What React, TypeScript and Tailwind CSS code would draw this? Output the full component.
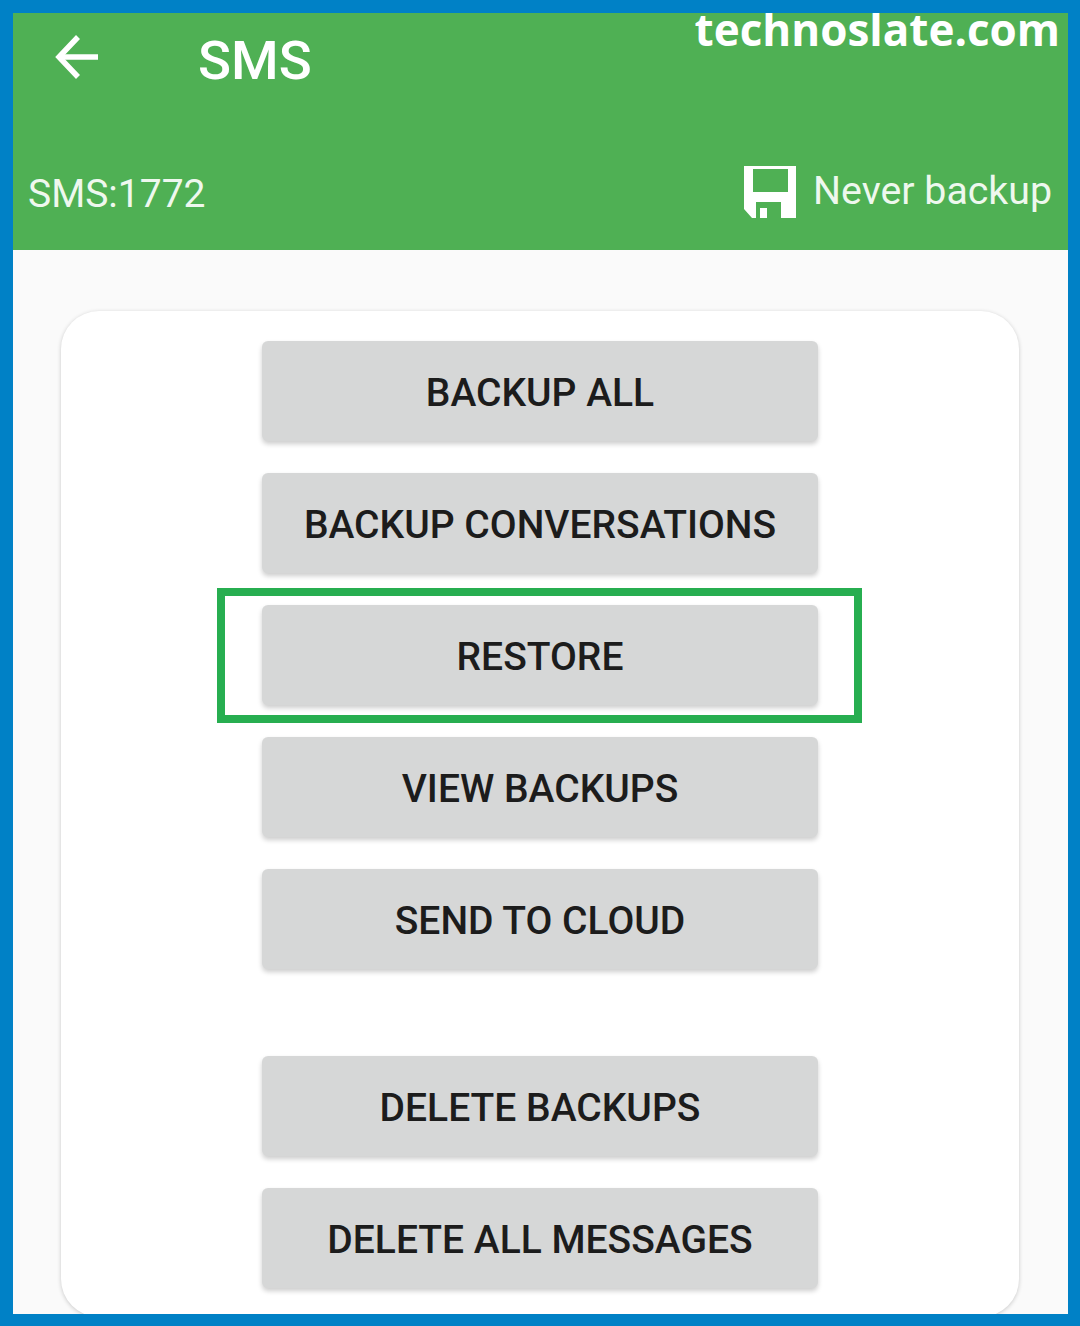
import React from 'react';

const topButtons = ['BACKUP ALL', 'BACKUP CONVERSATIONS', 'RESTORE', 'VIEW BACKUPS', 'SEND TO CLOUD'];
const bottomButtons = ['DELETE BACKUPS', 'DELETE ALL MESSAGES'];

function ActionButton({ label }: { label: string }) {
  return (
    <button className="w-[556px] h-[100px] shrink-0 flex items-center justify-center rounded-[6px] bg-[#d6d7d7] text-[#1c1c1c] text-[39px] font-medium pt-[4px] shadow-[0_3px_5px_rgba(0,0,0,0.2)]">
      {label}
    </button>
  );
}

export default function App() {
  return (
    <div className="w-[1080px] h-[1326px] bg-[#0081c6] pt-[13px] pl-[13px] pr-[12px] pb-[12px] font-['Roboto',sans-serif]">
      <div className="relative w-full h-full overflow-hidden flex flex-col bg-[#fafafa]">
        {/* Header */}
        <header className="relative h-[237px] shrink-0 bg-[#4fb054] text-white">
          <div className="flex items-center h-[94px] pl-[40px]">
            <svg className="w-[50px] h-[50px]" viewBox="0 0 50 50" fill="none" stroke="white" strokeWidth="5.5">
              <path d="M45 22H6" />
              <path d="M25 2L6 22L25 42" />
            </svg>
            <span className="ml-[95px] text-[54.5px] font-medium leading-none mt-[1px]">SMS</span>
          </div>
          <div className="flex items-center justify-between pl-[15px] pr-[16px] mt-[57px]">
            <span className="text-[39px] text-[#eef8ee] leading-none mt-[6px]">SMS:1772</span>
            <div className="flex items-center gap-[17px]">
              <svg className="w-[52px] h-[52px] mt-[2px]" viewBox="0 0 52 52" fill="white">
                <path fillRule="evenodd" d="M0 0H52V52H37V36H12V52H8L0 43ZM9 3V26H44V3Z" />
                <path d="M16 42H23V52H16Z" />
              </svg>
              <span className="text-[39.3px] text-[#eef8ee] leading-none mt-[2px]">Never backup</span>
            </div>
          </div>
          <span className="absolute right-[8px] top-[-14px] text-[44px] font-bold leading-[60px] font-['Open_Sans',sans-serif]">
            technoslate.com
          </span>
        </header>

        {/* Card */}
        <main className="flex-1 pt-[61px] pl-[48px] pr-[49px]">
          <div className="h-[1006px] rounded-[38px] bg-white shadow-[0_1px_4px_rgba(0,0,0,0.2)] pt-[30px] flex flex-col items-center">
            <div className="flex flex-col items-center gap-[32px]">
              {topButtons.map((label) => (
                <ActionButton key={label} label={label} />
              ))}
            </div>
            <div className="flex flex-col items-center gap-[32px] mt-[87px]">
              {bottomButtons.map((label) => (
                <ActionButton key={label} label={label} />
              ))}
            </div>
          </div>
        </main>

        {/* Highlight around RESTORE */}
        <div className="absolute left-[204px] top-[575px] w-[645px] h-[135px] border-[8px] border-[#27ae50]" />
      </div>
    </div>
  );
}
